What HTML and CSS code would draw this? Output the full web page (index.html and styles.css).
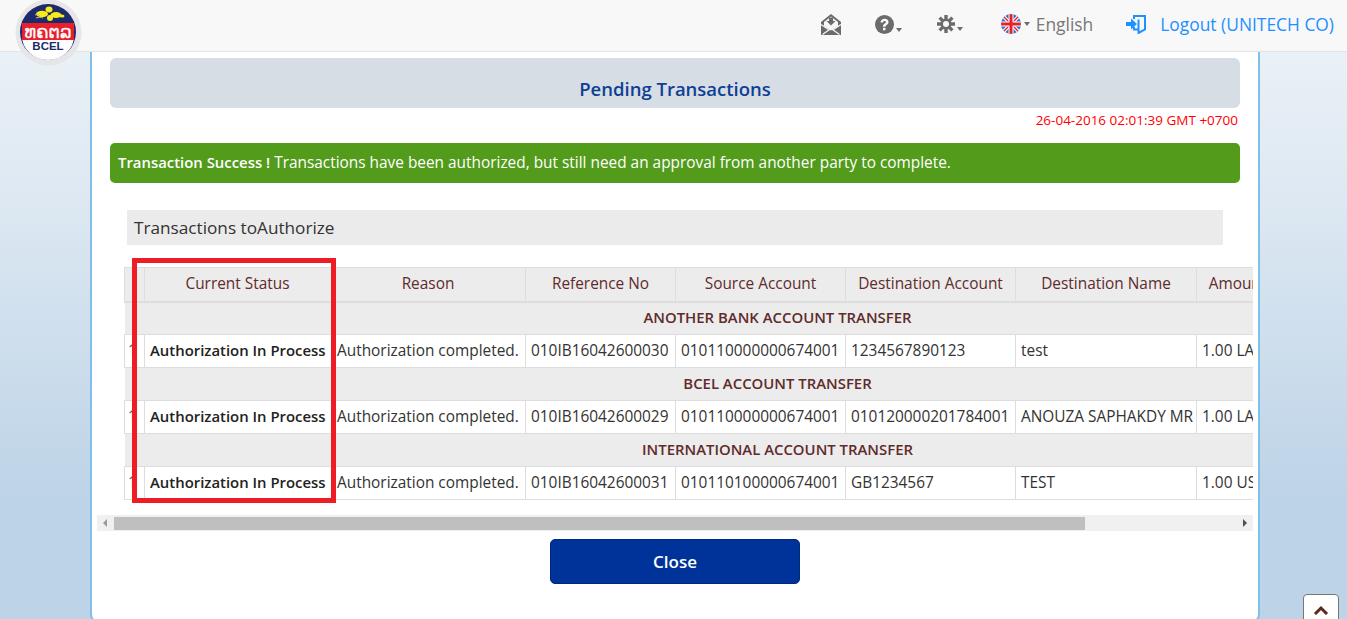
FILE: index.html
```html
<!DOCTYPE html>
<html lang="en">
<head>
  <meta charset="UTF-8" />
  <meta name="viewport" content="width=device-width, initial-scale=1.0"/>
  <title>BCEL - Pending Transactions</title>
  <link rel="stylesheet" href="styles.css">
</head>
<body>

  <header class="topbar">
    <div class="logo">
      <svg viewBox="0 0 67 66" width="67" height="66">
        <circle cx="33.500" cy="32.500" r="33" fill="#e6e6e8"/>
        <circle cx="33" cy="32" r="28" fill="#1d2a6b"/>
        <path d="M7 36h52a26 24 0 0 1-52 0z" fill="#fff"/>
        <rect x="7" y="23" width="52" height="17" fill="#e8202c"/>
        <g fill="#f6ec1c">
          <ellipse cx="34" cy="9.500" rx="3.500" ry="3"/>
          <ellipse cx="27" cy="14" rx="6" ry="3.200"/>
          <ellipse cx="41" cy="15" rx="5.500" ry="3"/>
          <ellipse cx="35" cy="18" rx="3" ry="3"/>
          <ellipse cx="47" cy="16" rx="2.500" ry="1.600"/>
        </g>
        <path d="M20 15c2-1 3-1 5 1M21 18c3-1 5-1 7 0" fill="none" stroke="#c9c074" stroke-width="1"/>
        <text x="33" y="37.500" class="logo-lao" text-anchor="middle" textLength="47" lengthAdjust="spacingAndGlyphs">ທຄຕລ</text>
        <text x="33" y="50" class="logo-name" text-anchor="middle">BCEL</text>
      </svg>
    </div>
    <nav class="topnav">
      <a class="nav-icon inbox" href="#">
        <svg viewBox="0 0 20 21" width="20" height="21">
          <path d="M10 0 20 8v13H0V8z" fill="#6b6b6b"/>
          <path d="M10 2.500 17 8v4l-7 4.500L3 12V8z" fill="#f8f8f8"/>
          <path d="M8 3.500h4V7h2.500L10 11.500 5.500 7H8z" fill="#6b6b6b"/>
          <path d="M0 10.500 7.500 15.500M20 10.500 12.500 15.500M1.500 20.500 10 14.500l8.500 6" fill="none" stroke="#f8f8f8" stroke-width="1.200"/>
        </svg>
      </a>
      <a class="nav-icon help" href="#">
        <svg viewBox="0 0 19 19" width="19" height="19">
          <circle cx="9.500" cy="9.500" r="9.500" fill="#6b6b6b"/>
          <path d="M5.500 7.500C5.500 2.500 13.500 2.500 13.500 7c0 3-3 2.800-3 4.800H8c0-3.300 2.900-3.100 2.900-4.700 0-1.600-2.900-1.500-2.900.5z" fill="#f8f8f8"/>
          <rect x="8" y="12.800" width="2.500" height="2.500" fill="#f8f8f8"/>
        </svg>
        <span class="caret"></span>
      </a>
      <a class="nav-icon gear" href="#">
        <svg viewBox="0 0 18 18" width="18" height="18">
          <circle cx="9" cy="9" r="5.500" fill="#6b6b6b"/>
          <path d="M9 0v18M0 9h18M2.600 2.600l12.800 12.800M15.400 2.600 2.600 15.400" stroke="#6b6b6b" stroke-width="3.400"/>
          <circle cx="9" cy="9" r="3" fill="#f8f8f8"/>
        </svg>
        <span class="caret"></span>
      </a>
      <a class="nav-lang" href="#">
        <svg viewBox="0 0 20 20" width="20" height="20">
          <defs><clipPath id="flagClip"><circle cx="10" cy="10" r="10"/></clipPath></defs>
          <g clip-path="url(#flagClip)">
            <rect width="20" height="20" fill="#2c77c4"/>
            <path d="M0 0 20 20M20 0 0 20" stroke="#fff" stroke-width="3.500"/>
            <path d="M0 0 20 20M20 0 0 20" stroke="#e8202c" stroke-width="1.400"/>
            <path d="M10 0v20M0 10h20" stroke="#fff" stroke-width="5"/>
            <path d="M10 0v20M0 10h20" stroke="#e8202c" stroke-width="3"/>
          </g>
        </svg>
        <span class="caret"></span>
        <span class="lang-name">English</span>
      </a>
      <a class="nav-logout" href="#">
        <svg viewBox="0 0 20 19" width="20" height="19">
          <path d="M8 4V1h11v13.500L12.500 18V4.500M12.500 14.500H8V12" fill="none" stroke="#1e90ff" stroke-width="2"/>
          <path d="M0 7h5V3.500L11 9l-6 5.500V11H0z" fill="#1e90ff"/>
        </svg>
        <span>Logout (UNITECH CO)</span>
      </a>
    </nav>
  </header>

  <main class="panel">
    <h2 class="page-title">Pending Transactions</h2>
    <div class="timestamp">26-04-2016 02:01:39 GMT +0700</div>
    <div class="alert-success"><b>Transaction Success !</b> Transactions have been authorized, but still need an approval from another party to complete.</div>

    <h3 class="section-title">Transactions toAuthorize</h3>

    <div class="table-wrap">
      <table class="tx-table">
        <thead>
          <tr>
            <th class="col-no"></th>
            <th class="col-status">Current Status</th>
            <th class="col-reason">Reason</th>
            <th class="col-ref">Reference No</th>
            <th class="col-acc">Source Account</th>
            <th class="col-acc">Destination Account</th>
            <th class="col-name">Destination Name</th>
            <th class="col-amount">Amount</th>
          </tr>
        </thead>
        <tbody>
          <tr class="group"><td></td><td></td><td colspan="6"><span class="group-label">ANOTHER BANK ACCOUNT TRANSFER</span></td></tr>
          <tr>
            <td class="no">1</td>
            <td class="status">Authorization In Process</td>
            <td>Authorization completed.</td>
            <td>010IB16042600030</td>
            <td>010110000000674001</td>
            <td>1234567890123</td>
            <td>test</td>
            <td>1.00 LAK</td>
          </tr>
          <tr class="group"><td></td><td></td><td colspan="6"><span class="group-label">BCEL ACCOUNT TRANSFER</span></td></tr>
          <tr>
            <td class="no">1</td>
            <td class="status">Authorization In Process</td>
            <td>Authorization completed.</td>
            <td>010IB16042600029</td>
            <td>010110000000674001</td>
            <td>010120000201784001</td>
            <td>ANOUZA SAPHAKDY MR</td>
            <td>1.00 LAK</td>
          </tr>
          <tr class="group"><td></td><td></td><td colspan="6"><span class="group-label">INTERNATIONAL ACCOUNT TRANSFER</span></td></tr>
          <tr>
            <td class="no">1</td>
            <td class="status">Authorization In Process</td>
            <td>Authorization completed.</td>
            <td>010IB16042600031</td>
            <td>010110100000674001</td>
            <td>GB1234567</td>
            <td>TEST</td>
            <td>1.00 USD</td>
          </tr>
        </tbody>
      </table>
      <div class="highlight-box"></div>
    </div>

    <div class="scrollbar">
      <span class="arrow-left"></span>
      <div class="scroll-track"><div class="scroll-thumb"></div></div>
      <span class="arrow-right"></span>
    </div>

    <div class="actions">
      <button class="btn-close">Close</button>
    </div>
  </main>

  <a class="to-top" href="#">
    <svg viewBox="0 0 16 10" width="16" height="10"><path d="M2 9 8 3l6 6" fill="none" stroke="#5b2a1e" stroke-width="3"/></svg>
  </a>

</body>
</html>
```

FILE: styles.css
```css
* {margin: 0; padding: 0; box-sizing: border-box;}
html, body {
  height: 619px;
  overflow: hidden;
}
body {
  font-family: 'Open Sans', sans-serif;
  font-size: 14px;
  color: #333;
  background: linear-gradient(to bottom, #eef4f8 0, #dde8f2 200px, #bdd3e7 500px);
}
a {
  text-decoration: none;
  color: inherit;
}

/* top bar */
.topbar {
  height: 52px;
  background: #f8f8f8;
  border-bottom: 1px solid #e4e4e4;
  display: flex;
  justify-content: space-between;
  align-items: flex-start;
  position: relative;
  z-index: 10;
}
.logo {
  position: absolute;
  left: 15px;
  top: 0;
}
.logo-lao {
  font-family: 'DejaVu Sans', sans-serif;
  font-size: 18px;
  fill: #fff;
  stroke: #fff;
  stroke-width: 0.3px;
}
.logo-name {
  font-family: 'Liberation Sans', sans-serif;
  font-size: 11.5px;
  font-weight: bold;
  fill: #1d2a6b;
}
.topnav {
  margin-left: auto;
  display: flex;
  align-items: center;
  height: 48px;
  padding-right: 13px;
  font-size: 17.4px;
}
.nav-icon, .nav-lang, .nav-logout {
  display: flex;
  align-items: center;
}
.inbox {margin-right: 34px;}
.help {margin-right: 35px;}
.gear {margin-right: 38px;}
.nav-lang {margin-right: 33px;}
.caret {
  display: inline-block;
  border-top: 4px solid #6b6b6b;
  border-left: 3.5px solid transparent;
  border-right: 3.5px solid transparent;
  margin-left: 2px;
  align-self: flex-end;
  margin-bottom: 2px;
}
.nav-lang .caret {
  align-self: center;
  margin-bottom: 0;
  margin-left: 3px;
}
.lang-name {
  color: #777;
  margin-left: 6px;
}
.nav-logout {
  color: #1e90ff;
  gap: 14px;
}

/* main panel */
.panel {
  width: 1170px;
  height: 572px;
  margin-left: 90px;
  background: #fff;
  border: solid #7fbfe8;
  border-width: 0 2px 2px 2px;
  border-radius: 0 0 10px 10px;
  padding: 6px 18px 0 18px;
}
.page-title {
  height: 50px;
  background: #d6dde5;
  border-radius: 6px;
  color: #0f3f94;
  font-size: 18.5px;
  font-weight: 600;
  text-align: center;
  padding-top: 16px;
  line-height: 30px;
}
.timestamp {
  color: #f00;
  font-size: 13.5px;
  text-align: right;
  padding-right: 2px;
  line-height: 25px;
  margin-bottom: 10px;
}
.alert-success {
  height: 40px;
  background: #529b1b;
  border-radius: 5px;
  color: #fff;
  padding-left: 8px;
  line-height: 39px;
  font-size: 15.4px;
}
.alert-success b {
  font-weight: 600;
  font-size: 14.9px;
}
.section-title {
  height: 35px;
  margin: 27px 17px 0 17px;
  background: #ebebeb;
  padding-left: 7px;
  font-size: 17.2px;
  font-weight: 500;
  line-height: 35px;
  color: #333;
}

/* table */
.table-wrap {
  width: 1129px;
  height: 245px;
  margin: 13px 0 0 14px;
  position: relative;
  overflow: hidden;
  padding-top: 9px;
}
.tx-table {
  border-collapse: collapse;
  table-layout: fixed;
  width: 1154px;
  font-size: 15.4px;
}
.tx-table th, .tx-table td {
  border: 1px solid #ddd;
  padding: 0 5px 2px;
  white-space: nowrap;
  overflow: hidden;
}
.tx-table th {
  height: 34px;
  background: #ececec;
  color: #5f2b2b;
  font-weight: 400;
  border-bottom-width: 2px;
}
.tx-table th.col-status, .tx-table th.col-reason {padding-right: 9px;}
.tx-table td {height: 33px;}
.col-no {width: 20px;}
.col-status {width: 190px;}
.col-reason {width: 191px;}
.col-ref {width: 150px;}
.col-acc {width: 170px;}
.col-name {width: 181px;}
.col-amount {width: 82px;}
.tx-table td.no {
  color: #555;
  padding-left: 3px;
}
.status {
  font-weight: 600;
  font-size: 14.9px;
  color: #222;
}
.tx-table td:nth-child(3) {padding-left: 2px;}
.group td {
  background: #ececec;
  border-left: none;
  border-right: none;
}
.group-label {
  color: #5f2b2b;
  font-weight: 600;
  font-size: 14.9px;
  display: block;
  text-align: center;
  width: 882px;
}
.highlight-box {
  position: absolute;
  left: 8px;
  top: 0;
  width: 204px;
  height: 245px;
  border: 5px solid #ee1c25;
}

/* fake scrollbar */
.scrollbar {
  width: 1156px;
  height: 16px;
  margin: 12px 0 0 -13px;
  background: #f0f0f0;
  display: flex;
  align-items: center;
  justify-content: space-between;
  padding: 0 6px;
  position: relative;
}
.arrow-left {
  border-right: 4px solid #999;
  border-top: 4px solid transparent;
  border-bottom: 4px solid transparent;
}
.arrow-right {
  border-left: 4px solid #505050;
  border-top: 4px solid transparent;
  border-bottom: 4px solid transparent;
}
.scroll-track {
  position: absolute;
  left: 17px;
  right: 17px;
  top: 2px;
  height: 13px;
}
.scroll-thumb {
  width: 971px;
  height: 13px;
  background: #bfbfbf;
}

.actions {
  display: flex;
  justify-content: center;
  margin-top: 8px;
}
.btn-close {
  width: 250px;
  height: 45px;
  background: #003399;
  border: 1px solid #002a80;
  border-radius: 5px;
  color: #fff;
  font-family: 'Open Sans', sans-serif;
  font-size: 17px;
  font-weight: 600;
}

.to-top {
  position: fixed;
  left: 1303px;
  bottom: -10px;
  width: 36px;
  height: 35px;
  background: #fff;
  border: 1px solid #777;
  border-radius: 4px;
  display: flex;
  justify-content: center;
  padding-top: 10px;
}
```
